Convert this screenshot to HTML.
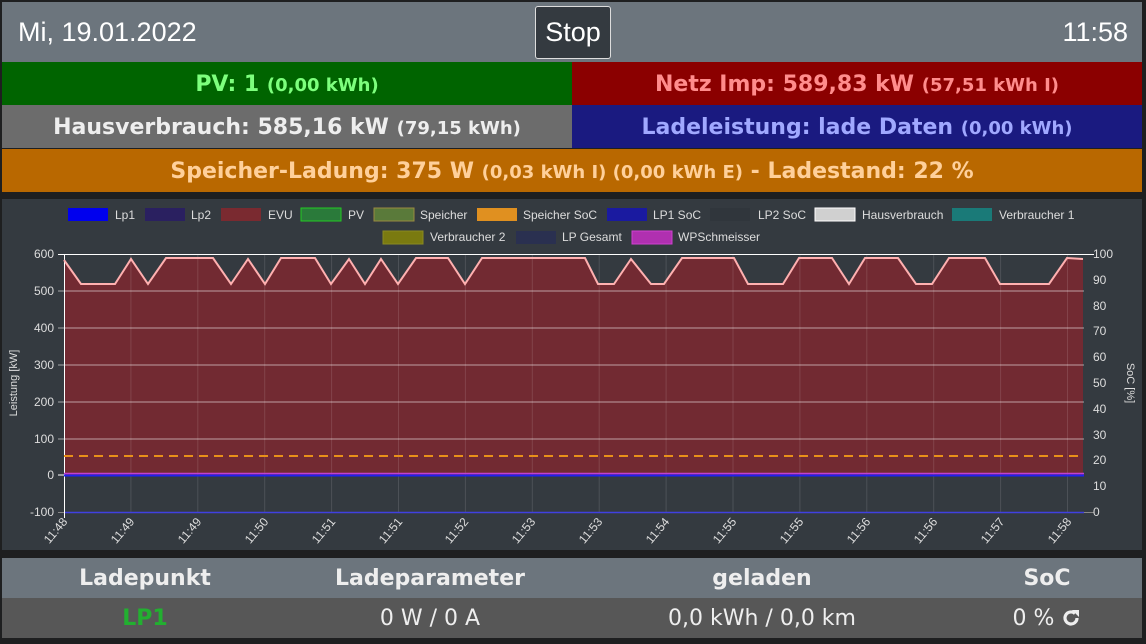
<!DOCTYPE html>
<html><head><meta charset="utf-8"><style>
*{margin:0;padding:0;box-sizing:border-box}
body{width:1146px;height:644px;background:#1e1f20;font-family:"Liberation Sans","DejaVu Sans",sans-serif;position:relative;overflow:hidden}
.hdr{position:absolute;left:2px;top:2px;width:1140px;height:60px;background:#6c757d;color:#fff;font-size:27px}
.hdr .d{position:absolute;left:16px;top:15px}
.hdr .t{position:absolute;right:14px;top:15px}
.stop{position:absolute;left:533px;top:4px;width:76px;height:53px;background:#343a40;border:1px solid #ddd;border-radius:3px;text-align:center;line-height:51px;font-size:27px}
.row{position:absolute;height:43px;line-height:45px;text-align:center;font-weight:bold;font-size:22px;font-family:"DejaVu Sans",sans-serif}
.row small{font-size:18px}
.tbl{position:absolute;left:2px;width:1140px;height:40px;display:flex;font-size:22px;font-family:"DejaVu Sans",sans-serif}
.tbl div{text-align:center;line-height:42px}
.c1{width:286px}.c2{width:284px}.c3{width:380px}.c4{width:190px}
</style></head><body>
<div class="hdr"><span class="d">Mi, 19.01.2022</span><div class="stop">Stop</div><span class="t">11:58</span></div>
<div class="row" style="left:2px;top:62px;width:570px;background:#006400;color:#7dff7d">PV: 1 <small>(0,00 kWh)</small></div>
<div class="row" style="left:572px;top:62px;width:570px;background:#8b0000;color:#ff8c8c">Netz Imp: 589,83 kW <small>(57,51 kWh I)</small></div>
<div class="row" style="left:2px;top:105px;width:570px;background:#6c6c6c;color:#eee">Hausverbrauch: 585,16 kW <small>(79,15 kWh)</small></div>
<div class="row" style="left:572px;top:105px;width:570px;background:#1a1a80;color:#a0a8ff">Ladeleistung: lade Daten <small>(0,00 kWh)</small></div>
<div class="row" style="left:2px;top:149px;width:1140px;background:#b96800;color:#ffd09a">Speicher-Ladung: 375 W <small>(0,03 kWh I) (0,00 kWh E)</small> - Ladestand: 22 %</div>

<svg style="position:absolute;left:0;top:0" width="1146" height="644" font-family="Liberation Sans, sans-serif">
<rect x="2" y="199" width="1140" height="351" fill="#343a40"/>
<g font-size="12" fill="#ddd">
<rect x="68" y="208" width="40" height="13" fill="#0000ee"/><text x="115" y="219">Lp1</text>
<rect x="145" y="208" width="40" height="13" fill="#2a2060"/><text x="191" y="219">Lp2</text>
<rect x="221" y="208" width="40" height="13" fill="#7a2a30"/><text x="268" y="219">EVU</text>
<rect x="301" y="208" width="40" height="13" fill="#2a7a3a" stroke="#22cc22"/><text x="348" y="219">PV</text>
<rect x="374" y="208" width="40" height="13" fill="#5a7a3a" stroke="#9a8a40"/><text x="420" y="219">Speicher</text>
<rect x="477" y="208" width="40" height="13" fill="#e09020"/><text x="523" y="219">Speicher SoC</text>
<rect x="607" y="208" width="40" height="13" fill="#1a1aa0"/><text x="653" y="219">LP1 SoC</text>
<rect x="710" y="208" width="40" height="13" fill="#30363c"/><text x="758" y="219">LP2 SoC</text>
<rect x="815" y="208" width="40" height="13" fill="#d0d0d0" stroke="#fff"/><text x="862" y="219">Hausverbrauch</text>
<rect x="952" y="208" width="40" height="13" fill="#1a7a78"/><text x="999" y="219">Verbraucher 1</text>
<rect x="383" y="231" width="40" height="13" fill="#7a7a10" stroke="#8a8a20"/><text x="430" y="241">Verbraucher 2</text>
<rect x="516" y="231" width="40" height="13" fill="#2a3050"/><text x="562" y="241">LP Gesamt</text>
<rect x="632" y="231" width="40" height="13" fill="#b030b0" stroke="#d040d0"/><text x="678" y="241">WPSchmeisser</text>
</g>
<path d="M64,475 L64,260 81,284 115,284 131,259 148,284 166,258 213,258 231,284 248,259 265,284 281,258 315,258 331,284 349,259 365,284 381,259 398,284 416,258 448,258 465,284 482,258 585,258 598,284 614,284 631,259 651,284 664,284 682,258 734,258 748,284 783,284 799,258 832,258 849,284 865,258 898,258 916,284 932,284 949,258 985,258 1000,284 1049,284 1067,258 1083,259 L1083,475 Z" fill="#722a32"/>
<g stroke="rgba(255,255,255,0.12)" stroke-width="1">
<line x1="130.9" y1="254" x2="130.9" y2="512"/><line x1="197.8" y1="254" x2="197.8" y2="512"/><line x1="264.7" y1="254" x2="264.7" y2="512"/><line x1="331.6" y1="254" x2="331.6" y2="512"/><line x1="398.5" y1="254" x2="398.5" y2="512"/><line x1="465.4" y1="254" x2="465.4" y2="512"/><line x1="532.3" y1="254" x2="532.3" y2="512"/><line x1="599.2" y1="254" x2="599.2" y2="512"/><line x1="666.1" y1="254" x2="666.1" y2="512"/><line x1="733" y1="254" x2="733" y2="512"/><line x1="799.9" y1="254" x2="799.9" y2="512"/><line x1="866.8" y1="254" x2="866.8" y2="512"/><line x1="933.7" y1="254" x2="933.7" y2="512"/><line x1="1000.6" y1="254" x2="1000.6" y2="512"/><line x1="1067.5" y1="254" x2="1067.5" y2="512"/>
</g>
<g stroke="rgba(255,255,255,0.55)" stroke-width="1">
<line x1="58" y1="291" x2="1084" y2="291"/><line x1="58" y1="328" x2="1084" y2="328"/><line x1="58" y1="365" x2="1084" y2="365"/><line x1="58" y1="402" x2="1084" y2="402"/><line x1="58" y1="439" x2="1084" y2="439"/>
</g>
<line x1="58" y1="254.5" x2="1094" y2="254.5" stroke="#fff"/>
<line x1="58" y1="475" x2="64" y2="475" stroke="#fff"/>
<line x1="58" y1="512.5" x2="1094" y2="512.5" stroke="#888"/>
<line x1="64" y1="512.5" x2="1084" y2="512.5" stroke="#4040e0" stroke-width="1.5"/>
<line x1="64.5" y1="254" x2="64.5" y2="518" stroke="#fff"/>
<path d="M64,260 81,284 115,284 131,259 148,284 166,258 213,258 231,284 248,259 265,284 281,258 315,258 331,284 349,259 365,284 381,259 398,284 416,258 448,258 465,284 482,258 585,258 598,284 614,284 631,259 651,284 664,284 682,258 734,258 748,284 783,284 799,258 832,258 849,284 865,258 898,258 916,284 932,284 949,258 985,258 1000,284 1049,284 1067,258 1083,259" fill="none" stroke="#ffb0b0" stroke-width="2"/>
<line x1="64" y1="456" x2="1084" y2="456" stroke="#e8901a" stroke-width="2" stroke-dasharray="9,6"/>
<line x1="64" y1="473.5" x2="1084" y2="473.5" stroke="#c040d0" stroke-width="1.5"/>
<line x1="64" y1="475.5" x2="1084" y2="475.5" stroke="#2020f0" stroke-width="2"/>
<g font-size="12" fill="#ddd" text-anchor="end">
<text x="54" y="258">600</text><text x="54" y="295">500</text><text x="54" y="332">400</text><text x="54" y="369">300</text><text x="54" y="406">200</text><text x="54" y="443">100</text><text x="54" y="479">0</text><text x="54" y="516">-100</text>
</g>
<g font-size="12" fill="#ddd">
<text x="1093" y="258">100</text><text x="1093" y="284">90</text><text x="1093" y="310">80</text><text x="1093" y="335">70</text><text x="1093" y="361">60</text><text x="1093" y="387">50</text><text x="1093" y="413">40</text><text x="1093" y="439">30</text><text x="1093" y="464">20</text><text x="1093" y="490">10</text><text x="1093" y="516">0</text>
</g>
<text transform="translate(17,383) rotate(-90)" font-size="11" fill="#ddd" text-anchor="middle">Leistung [kW]</text>
<text transform="translate(1127,383) rotate(90)" font-size="11" fill="#ddd" text-anchor="middle">SoC [%]</text>
<g font-size="12" fill="#ddd" text-anchor="end">
<text transform="translate(68,522) rotate(-50)">11:48</text><text transform="translate(135,522) rotate(-50)">11:49</text><text transform="translate(202,522) rotate(-50)">11:49</text><text transform="translate(269,522) rotate(-50)">11:50</text><text transform="translate(336,522) rotate(-50)">11:51</text><text transform="translate(403,522) rotate(-50)">11:51</text><text transform="translate(469,522) rotate(-50)">11:52</text><text transform="translate(536,522) rotate(-50)">11:53</text><text transform="translate(603,522) rotate(-50)">11:53</text><text transform="translate(670,522) rotate(-50)">11:54</text><text transform="translate(737,522) rotate(-50)">11:55</text><text transform="translate(804,522) rotate(-50)">11:55</text><text transform="translate(871,522) rotate(-50)">11:56</text><text transform="translate(938,522) rotate(-50)">11:56</text><text transform="translate(1005,522) rotate(-50)">11:57</text><text transform="translate(1072,522) rotate(-50)">11:58</text>
</g>
</svg>

<div class="tbl" style="top:558px;background:#6c757d;color:#eee;font-weight:bold"><div class="c1">Ladepunkt</div><div class="c2">Ladeparameter</div><div class="c3">geladen</div><div class="c4">SoC</div></div>
<div class="tbl" style="top:598px;background:#575757;color:#eee"><div class="c1" style="color:#22b030;font-weight:bold">LP1</div><div class="c2">0 W / 0 A</div><div class="c3">0,0 kWh / 0,0 km</div><div class="c4">0 % <svg width="20" height="20" viewBox="0 0 20 20" style="vertical-align:-3px"><path d="M16,10 A6,6 0 1 1 14,5.5" fill="none" stroke="#eee" stroke-width="3.2"/><path d="M11,2 L18,2 L18,9 Z" fill="#eee"/></svg></div></div>
</body></html>
